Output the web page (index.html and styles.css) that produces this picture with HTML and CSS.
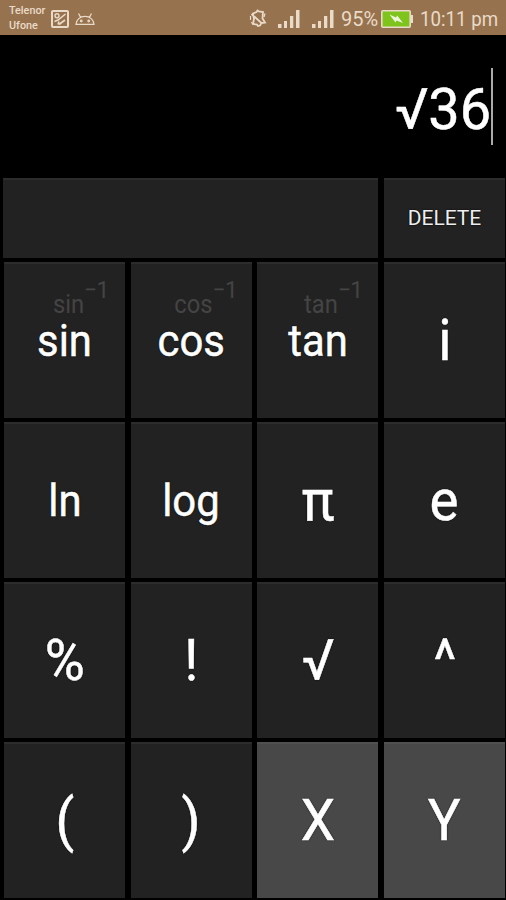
FILE: index.html
```html
<!DOCTYPE html>
<html lang="en">
<head>
<meta charset="utf-8">
<title>Calculator</title>
<link rel="stylesheet" href="styles.css">
</head>
<body>
<header class="status">
  <div class="carriers"><span>Telenor</span><span>Ufone</span></div>
  <svg class="picture" viewBox="0 0 18 18" width="18" height="18" fill="none" stroke="currentColor" stroke-width="2"><rect x="1" y="1" width="16" height="16" rx="1"/><circle cx="6" cy="5.800" r="2" stroke-width="1.400"/><path d="M3.500 11.500 7 10l7.500-6M7 14.500l1-3M8 14.500 14 10" stroke-width="1.600"/></svg>
  <svg class="android" viewBox="0 0 20 14" width="20" height="14" fill="none" stroke="currentColor" stroke-width="1.200"><path d="M1 12.300C1.300 7.800 5 4.300 10 4.300s8.700 3.500 9 8zM5.600 5.400 3.500 1.500M14.400 5.400l2.100-3.900"/><circle cx="6.300" cy="9" r=".8"/><circle cx="13.700" cy="9" r=".8"/></svg>
  <div class="spacer"></div>
  <svg class="mute" viewBox="0 0 18 19" width="18" height="19" fill="none" stroke="currentColor" stroke-width="1.800"><path d="M4 4.500 7.500 3l1-1.500 1.500 1 4 .5-.5 6.500 2.500 4-3.500.5-1.500 2.500-2 .5-1-1.500-4-.5 1-5zM2.500 5 13 14.500"/><path d="M1.500 7v4M16 4.500 15 8M2.500 13l1 2" stroke-width="1.200"/></svg>
  <svg class="signal" viewBox="0 0 22 18" width="22" height="18" fill="currentColor"><path d="M0 14h3.500v4H0zM6 11h3v7H6zM12 6h3.300v12H12zM18 0h3.500v18H18z"/></svg>
  <svg class="signal second" viewBox="0 0 22 18" width="22" height="18" fill="currentColor"><path d="M0 14h3.500v4H0zM6 11h3v7H6zM12 6h3.300v12H12zM18 0h3.500v18H18z"/></svg>
  <span class="percent">95%</span>
  <svg class="battery" viewBox="0 0 32 18" width="32" height="18"><rect x=".8" y=".8" width="28.400" height="16.400" rx="1" fill="#7fc31d" stroke="#eadac8" stroke-width="1.600"/><path d="M30 5h2v8h-2z" fill="#eadac8"/><path d="M8.500 4.500 15 7.500l1.200-2L22 13l-6.500-2.500-1 2z" fill="#eef5dc"/></svg>
  <span class="clock">10:11 pm</span>
</header>
<section class="display"><span class="expr">√36</span><span class="caret"></span></section>
<div class="toolbar">
  <div class="panel"></div>
  <button class="key delete">DELETE</button>
</div>
<main class="keys">
  <button class="key word"><span class="hint">sin<span class="inv">−1</span></span><span class="label">sin</span></button>
  <button class="key word"><span class="hint hint-cos">cos<span class="inv">−1</span></span><span class="label">cos</span></button>
  <button class="key word"><span class="hint">tan<span class="inv">−1</span></span><span class="label">tan</span></button>
  <button class="key"><span class="label">i</span></button>
  <button class="key word"><span class="label">ln</span></button>
  <button class="key word"><span class="label">log</span></button>
  <button class="key"><span class="label">π</span></button>
  <button class="key"><span class="label">e</span></button>
  <button class="key"><span class="label">%</span></button>
  <button class="key"><span class="label">!</span></button>
  <button class="key"><span class="label">√</span></button>
  <button class="key"><span class="label">^</span></button>
  <button class="key"><span class="label">(</span></button>
  <button class="key"><span class="label">)</span></button>
  <button class="key light"><span class="label">X</span></button>
  <button class="key light"><span class="label">Y</span></button>
</main>
</body>
</html>
```
FILE: styles.css
```css
* { box-sizing: border-box; }
body {
  margin: 0;
  width: 506px;
  height: 900px;
  overflow: hidden;
  background: #000;
  color: #fff;
  font-family: Roboto, sans-serif;
  display: flex;
  flex-direction: column;
}
.status {
  height: 35px;
  flex: none;
  background: #96734e;
  color: #eadac8;
  display: flex;
  align-items: center;
  padding: 2px 8px 0 9px;
}
.carriers {
  display: flex;
  flex-direction: column;
  width: 42px;
  font-size: 10.8px;
  line-height: 15px;
  font-weight: 500;
  margin-top: -2px;
}
.android { margin-left: 6px; }
.spacer { flex: 1; }
.mute { margin-right: 11px; }
.signal { margin-right: 12px; }
.second { margin-right: 7px; }
.percent { font-size: 20px; width: 40px; white-space: nowrap; }
.clock {
  font-size: 20px;
  width: 78px;
  margin-left: 7px;
  white-space: nowrap;
  transform: scaleX(.935);
  transform-origin: left;
}
.display {
  height: 143px;
  flex: none;
  display: flex;
  justify-content: flex-end;
  align-items: center;
  padding: 0 13px 0 0;
  font-size: 57px;
}
.expr {
  line-height: 67px;
  margin-top: 6px;
  transform: scaleX(.98);
  transform-origin: right;
  -webkit-text-stroke: .5px #fff;
}
.caret { width: 2px; height: 77px; margin-top: -1px; background: #aaa; }
.toolbar {
  display: grid;
  grid-template-columns: 375px 121px;
  column-gap: 6px;
  height: 80px;
  flex: none;
  padding-left: 3px;
  margin-bottom: 4px;
}
.panel, .key {
  background: #222;
  border: 0;
  box-shadow: inset 0 2px #2c2c2c;
}
.keys {
  display: grid;
  grid-template-columns: repeat(4, 121px);
  grid-template-rows: repeat(4, 156px);
  gap: 4px 5.7px;
  padding-left: 4px;
}
.key {
  position: relative;
  display: flex;
  align-items: center;
  justify-content: center;
  margin: 0;
  padding: 1px 0 0;
  color: #fff;
  font-family: inherit;
  font-size: 57px;
  line-height: 67px;
  text-shadow: 0 0 2px #000;
}
.label {
  transform: scaleX(.96);
  -webkit-text-stroke: .5px #fff;
}
.word { font-size: 45px; line-height: 53px; }
.word .label { transform: scaleX(.93); }
.delete { font-size: 21px; line-height: 25px; color: #eee; }
.light { box-shadow: inset 0 2px #505050; background: #484848; }
.hint {
  position: absolute;
  top: 27px;
  right: 16px;
  display: flex;
  font-size: 25px;
  line-height: 31px;
  color: #444;
  text-shadow: none;
  transform: scaleX(.95);
  transform-origin: right;
}
.hint-cos { right: 14px; }
.inv {
  font-size: 24px;
  letter-spacing: -.6px;
  line-height: 15px;
  margin-top: -6px;
}
```
